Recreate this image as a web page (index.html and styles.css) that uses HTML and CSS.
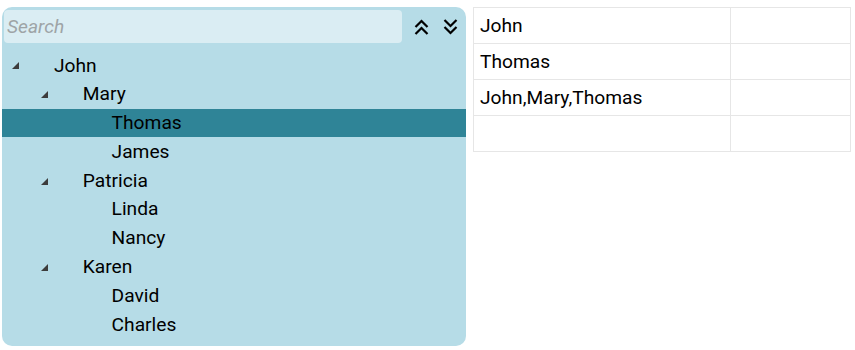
FILE: index.html
```html
<!DOCTYPE html>
<html>
<head>
<meta charset="utf-8">
<link rel="stylesheet" href="styles.css">
</head>
<body>
<div class="page">
  <div class="panel">
    <div class="toolbar">
      <input class="search" type="text" placeholder="Search">
      <span class="tool-btn">
        <svg width="15" height="16" viewBox="0 0 15 16"><polyline points="1.5,8 7.5,2 13.5,8" fill="none" stroke="#000" stroke-width="2.2"/><polyline points="1.5,15 7.5,9 13.5,15" fill="none" stroke="#000" stroke-width="2.2"/></svg>
      </span>
      <span class="tool-btn">
        <svg width="15" height="16" viewBox="0 0 15 16"><polyline points="1.5,1 7.5,7 13.5,1" fill="none" stroke="#000" stroke-width="2.2"/><polyline points="1.5,8 7.5,14 13.5,8" fill="none" stroke="#000" stroke-width="2.2"/></svg>
      </span>
    </div>
    <ul class="tree">
      <li class="node lvl0"><span class="exp"><i class="tri"></i></span>John</li>
      <li class="node lvl1"><span class="exp"><i class="tri"></i></span>Mary</li>
      <li class="node lvl2 selected"><span class="exp"></span>Thomas</li>
      <li class="node lvl2"><span class="exp"></span>James</li>
      <li class="node lvl1"><span class="exp"><i class="tri"></i></span>Patricia</li>
      <li class="node lvl2"><span class="exp"></span>Linda</li>
      <li class="node lvl2"><span class="exp"></span>Nancy</li>
      <li class="node lvl1"><span class="exp"><i class="tri"></i></span>Karen</li>
      <li class="node lvl2"><span class="exp"></span>David</li>
      <li class="node lvl2"><span class="exp"></span>Charles</li>
    </ul>
  </div>
  <table class="grid">
    <tr><td class="c1">John</td><td class="c2"></td></tr>
    <tr><td class="c1">Thomas</td><td class="c2"></td></tr>
    <tr><td class="c1">John,Mary,Thomas</td><td class="c2"></td></tr>
    <tr><td class="c1"></td><td class="c2"></td></tr>
  </table>
</div>
</body>
</html>
```
FILE: styles.css
```css
html, body {
  margin: 0;
  padding: 0;
  background: #ffffff;
}
body {
  font-family: Roboto, "Liberation Sans", sans-serif;
  font-size: 19.2px;
  color: #000;
}
.page {
  display: flex;
  align-items: flex-start;
  gap: 7px;
  padding: 7px 4px 0 2px;
}
.panel {
  width: 464px;
  height: 339px;
  box-sizing: border-box;
  background: #b6dce7;
  border-radius: 10px;
  padding-top: 3px;
}
.toolbar {
  display: flex;
  align-items: center;
  padding-left: 2px;
}
.search {
  width: 398px;
  height: 33px;
  box-sizing: border-box;
  border: none;
  outline: none;
  border-radius: 4px;
  background: #daedf3;
  font-family: Roboto, "Liberation Sans", sans-serif;
  font-size: 19.2px;
  padding: 0 0 0 3px;
  margin: 0;
}
.search::placeholder {
  color: #9ea4a6;
  font-style: italic;
}
.tool-btn {
  display: flex;
  width: 15px;
  height: 16px;
  margin-left: 12px;
}
.tool-btn + .tool-btn {
  margin-left: 14px;
}
.tree {
  list-style: none;
  margin: 8px 0 0 0;
  padding: 0;
}
.node {
  display: flex;
  align-items: center;
  height: 28.8px;
  line-height: 28.8px;
  padding-top: 1px;
  box-sizing: border-box;
  white-space: nowrap;
}
.node.selected {
  background: #2f8497;
}
.lvl0 { padding-left: 0; }
.lvl1 { padding-left: 28.8px; }
.lvl2 { padding-left: 57.6px; }
.exp {
  display: flex;
  align-items: center;
  width: 52px;
  height: 100%;
  flex: none;
}
.tri {
  display: block;
  width: 0;
  height: 0;
  margin-left: 10px;
  border-style: solid;
  border-width: 0 0 7px 7px;
  border-color: transparent transparent #3c3c3c transparent;
}
.grid {
  border-collapse: collapse;
  width: 378px;
}
.grid td {
  border: 1px solid #e6e6e6;
  height: 36px;
  box-sizing: border-box;
  padding: 0 0 0 6px;
  vertical-align: middle;
}
.grid td.c1 { width: 257px; }
.grid td.c2 { width: 121px; }
```
